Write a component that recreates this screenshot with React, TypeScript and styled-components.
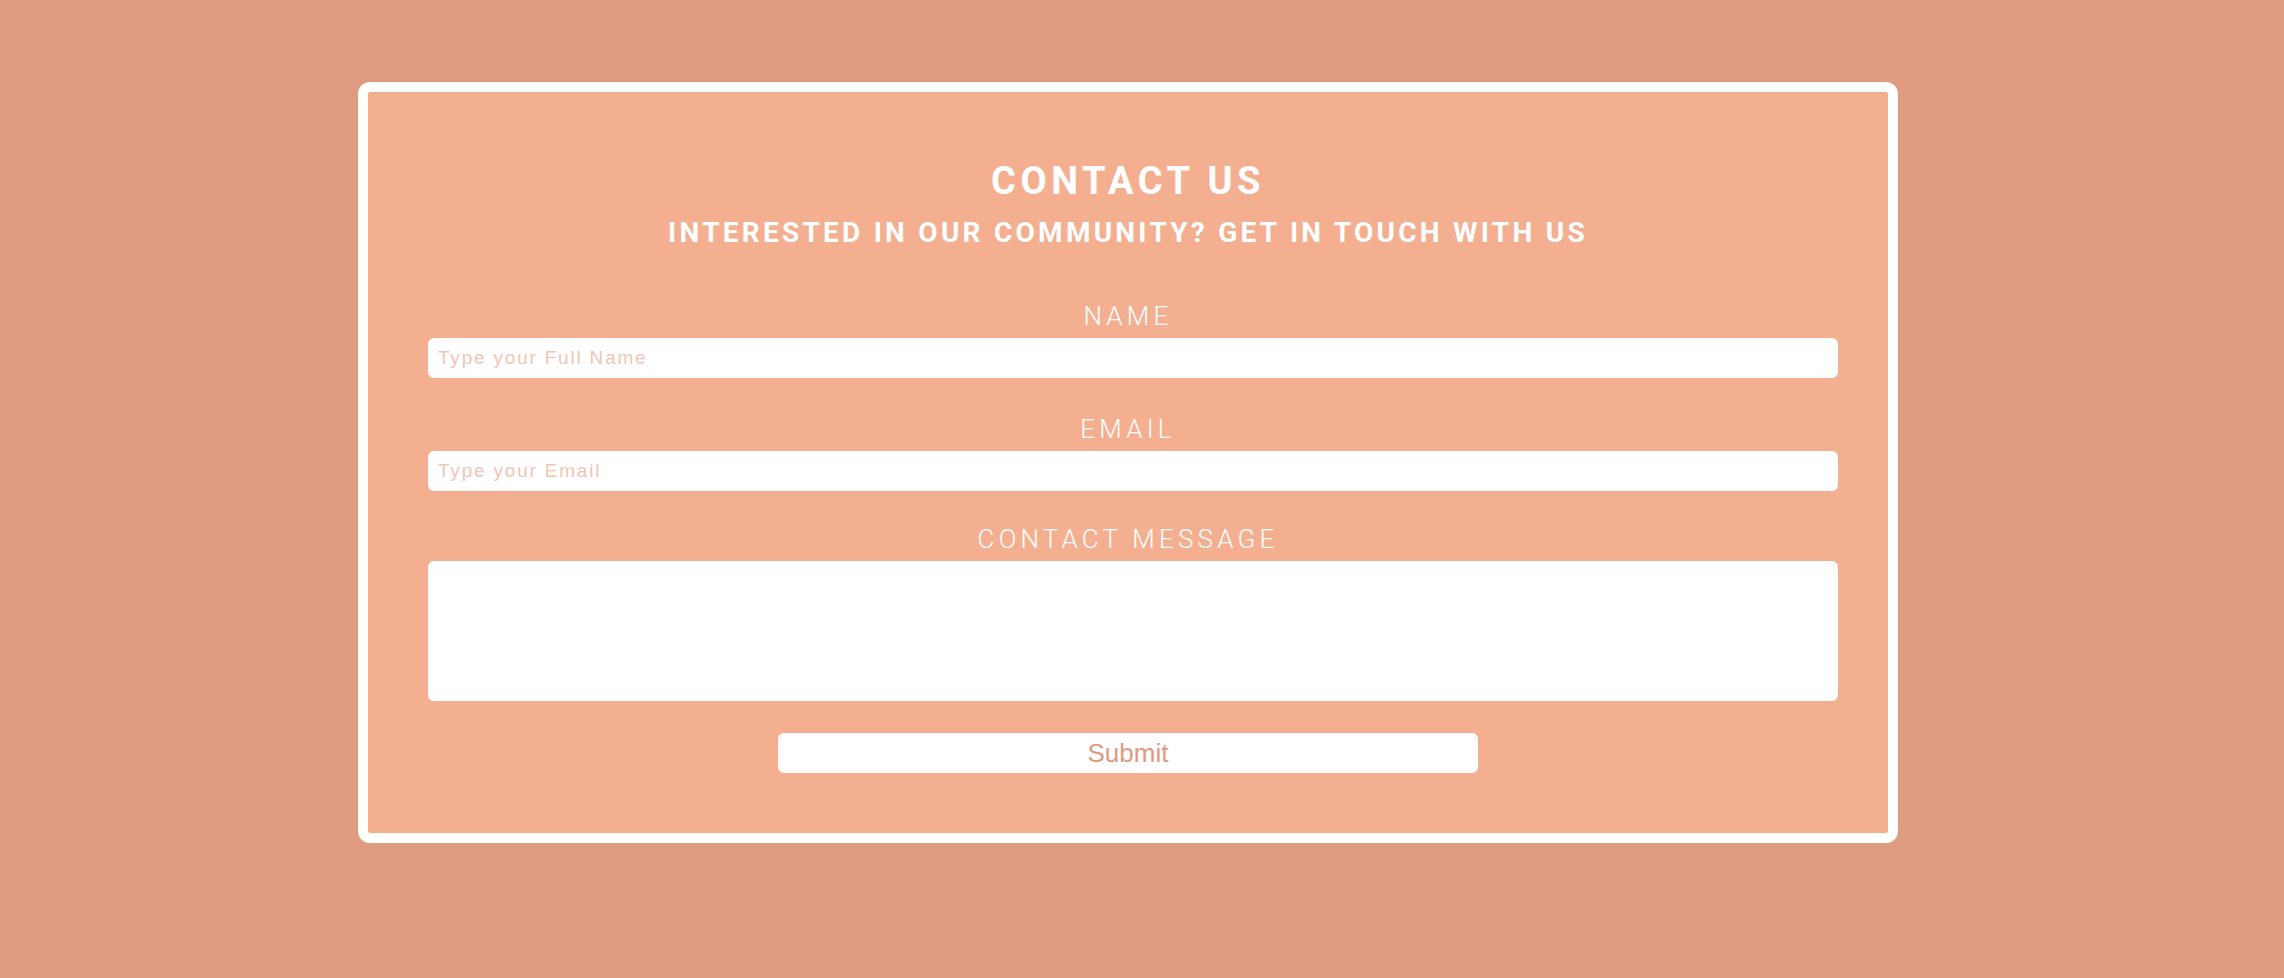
import React from 'react';
import styled, { createGlobalStyle } from 'styled-components';

const GlobalStyle = createGlobalStyle`
  * {
    box-sizing: border-box;
  }

  body {
    margin: 0;
    background-color: #de9b7f;
    font-family: Roboto, "Liberation Sans", sans-serif;
  }
`;

const Page = styled.main`
  min-height: 978px;
  padding: 82px 0 0 358px;
`;

const Card = styled.section`
  width: 1540px;
  background-color: #f4af91;
  border: 10px solid #fff;
  border-radius: 12px;
  padding: 67px 50px 60px;

  display: flex;
  flex-direction: column;
  align-items: center;
`;

const Title = styled.h1`
  margin: 0;
  font-size: 38px;
  line-height: 44px;
  font-weight: 700;
  letter-spacing: 4.5px;
  color: #fff;
  text-transform: uppercase;
`;

const Subtitle = styled.h2`
  margin: 13px 0 0;
  font-size: 28px;
  line-height: 34px;
  font-weight: 700;
  letter-spacing: 3.25px;
  color: #fff;
  text-transform: uppercase;
`;

const Form = styled.form`
  width: 1410px;
  margin: 51px 0 0 10px;

  display: flex;
  flex-direction: column;
  align-items: center;
`;

const Field = styled.div<{ $gap: number }>`
  width: 100%;
  margin-top: ${(p) => p.$gap}px;

  display: flex;
  flex-direction: column;
  align-items: center;
`;

const Label = styled.label`
  font-size: 26px;
  line-height: 30px;
  font-weight: 300;
  letter-spacing: 4.2px;
  color: #fff;
  text-transform: uppercase;
  margin: 0 10px 7px 0;
`;

const Input = styled.input`
  width: 100%;
  height: 40px;
  border: none;
  border-radius: 6px;
  background-color: #fff;
  padding: 0 10px;
  font-family: "Liberation Sans", Arial, sans-serif;
  font-size: 19px;
  letter-spacing: 1.8px;
  color: #c98a70;
  outline: none;

  &::placeholder {
    color: #efc6b5;
  }
`;

const Message = styled.textarea`
  width: 100%;
  height: 140px;
  border: none;
  border-radius: 6px;
  background-color: #fff;
  padding: 10px;
  resize: none;
  outline: none;
  font-family: "Liberation Sans", Arial, sans-serif;
  font-size: 19px;
`;

const SubmitButton = styled.button`
  width: 700px;
  height: 40px;
  margin: 32px 10px 0 0;
  border: none;
  border-radius: 6px;
  background-color: #fff;
  color: #de9b7f;
  font-family: "Liberation Sans", Arial, sans-serif;
  font-size: 26px;
  cursor: pointer;
`;

const App: React.FC = () => {
  return (
    <Page>
      <GlobalStyle />
      <Card>
        <Title>Contact Us</Title>
        <Subtitle>Interested in our community? Get in touch with us</Subtitle>

        <Form onSubmit={(e) => e.preventDefault()}>
          <Field $gap={0}>
            <Label htmlFor="name">Name</Label>
            <Input id="name" type="text" placeholder="Type your Full Name" />
          </Field>

          <Field $gap={36}>
            <Label htmlFor="email">Email</Label>
            <Input id="email" type="email" placeholder="Type your Email" />
          </Field>

          <Field $gap={33}>
            <Label htmlFor="message">Contact Message</Label>
            <Message id="message" />
          </Field>

          <SubmitButton type="submit">Submit</SubmitButton>
        </Form>
      </Card>
    </Page>
  );
};

export default App;
